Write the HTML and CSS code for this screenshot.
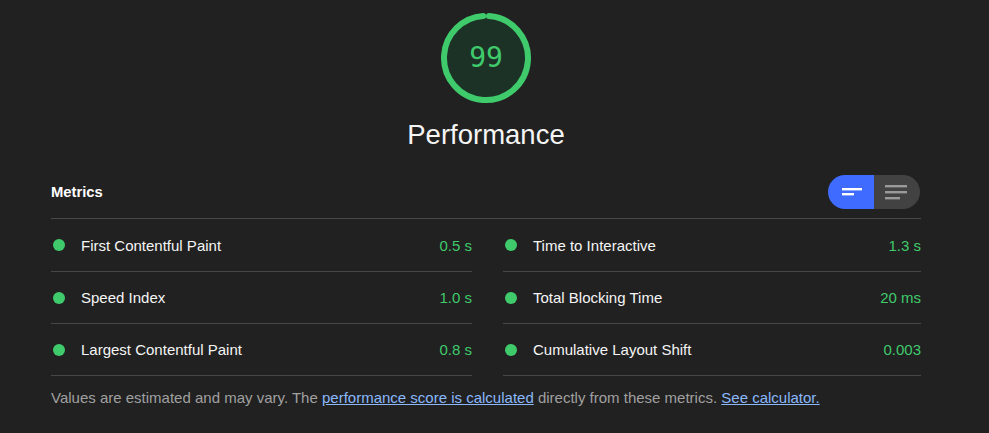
FILE: index.html
```html
<!DOCTYPE html>
<html>
<head>
<meta charset="utf-8">
<link rel="stylesheet" href="styles.css">
</head>
<body>
<div class="report">
  <div class="gauge-wrap">
    <div class="gauge">
      <svg width="92" height="92" viewBox="0 0 92 92">
        <circle cx="46" cy="46" r="42" fill="rgba(0,204,102,0.1)" stroke="none"/>
        <circle cx="46" cy="46" r="42" fill="none" stroke="#3fca6b" stroke-width="6" stroke-linecap="round" stroke-dasharray="257.6 263.9" transform="rotate(-85.9 46 46)"/>
      </svg>
      <span class="score">99</span>
    </div>
    <div class="title">Performance</div>
  </div>

  <div class="header">
    <div class="heading">Metrics</div>
    <div class="toggle">
      <div class="tog tog-on">
        <svg width="22" height="10" viewBox="0 0 22 10"><rect x="1" y="1" width="20" height="2.4" fill="#fff"/><rect x="1" y="6" width="12" height="2.4" fill="#fff"/></svg>
      </div>
      <div class="tog tog-off">
        <svg width="24" height="16" viewBox="0 0 24 16"><rect x="1" y="1" width="22" height="2.4" fill="#9a9a9a"/><rect x="1" y="7" width="22" height="2.4" fill="#9a9a9a"/><rect x="1" y="13" width="15" height="2.4" fill="#9a9a9a"/></svg>
      </div>
    </div>
  </div>

  <div class="grid">
    <div class="row"><span class="dot"></span><span class="name">First Contentful Paint</span><span class="val">0.5 s</span></div>
    <div class="row"><span class="dot"></span><span class="name">Time to Interactive</span><span class="val">1.3 s</span></div>
    <div class="row"><span class="dot"></span><span class="name">Speed Index</span><span class="val">1.0 s</span></div>
    <div class="row"><span class="dot"></span><span class="name">Total Blocking Time</span><span class="val">20 ms</span></div>
    <div class="row"><span class="dot"></span><span class="name">Largest Contentful Paint</span><span class="val">0.8 s</span></div>
    <div class="row"><span class="dot"></span><span class="name">Cumulative Layout Shift</span><span class="val">0.003</span></div>
  </div>

  <p class="footer">Values are estimated and may vary. The <a href="#">performance score is calculated</a> directly from these metrics. <a href="#">See calculator.</a></p>
</div>
</body>
</html>
```

FILE: styles.css
```css
html, body {
  margin: 0;
  padding: 0;
  background: #212121;
}
body {
  font-family: "Liberation Sans", Arial, sans-serif;
  color: #f5f5f5;
  font-size: 15px;
}
.report {
  width: 870px;
  margin-left: 51px;
}
.gauge-wrap {
  display: flex;
  flex-direction: column;
  align-items: center;
  padding-top: 12px;
}
.gauge {
  position: relative;
  width: 92px;
  height: 92px;
}
.gauge svg {
  display: block;
}
.score {
  position: absolute;
  left: 0;
  top: 0;
  width: 92px;
  height: 92px;
  line-height: 92px;
  text-align: center;
  font-family: "DejaVu Sans Mono", monospace;
  font-size: 28px;
  color: #3fca6b;
}
.title {
  margin-top: 15px;
  font-size: 27.5px;
  line-height: 32px;
  color: #f5f5f5;
}
.header {
  display: flex;
  align-items: center;
  justify-content: space-between;
  margin-top: 24px;
  height: 34px;
  margin-bottom: 9px;
}
.heading {
  font-weight: bold;
  font-size: 14.8px;
  color: #fff;
}
.toggle {
  display: flex;
  width: 92px;
  height: 34px;
  border-radius: 17px;
  overflow: hidden;
  margin-right: 1px;
}
.tog {
  flex: 1;
  display: flex;
  align-items: center;
  justify-content: center;
}
.tog-on {
  background: #3f6bff;
  padding-left: 2px;
}
.tog-off {
  background: #424242;
  padding-right: 2px;
}
.grid {
  display: grid;
  grid-template-columns: 421px 418px;
  column-gap: 31px;
  border-top: 1px solid #474747;
  background: linear-gradient(to right, transparent 421px, #212121 421px, #212121 452px, transparent 452px);
}
.row {
  display: flex;
  align-items: center;
  height: 51px;
  border-bottom: 1px solid #474747;
}
.grid .row:nth-child(1), .grid .row:nth-child(2) {
  height: 52px;
}
.dot {
  width: 12px;
  height: 12px;
  border-radius: 50%;
  background: #3fca6b;
  margin-left: 2px;
  margin-right: 16px;
  flex: none;
}
.name {
  flex: 1;
  color: #f5f5f5;
}
.val {
  color: #3fca6b;
}
.footer {
  margin: 12px 0 0;
  line-height: 20px;
  color: #a0a0a0;
}
.footer a {
  color: #8ab8fb;
  text-decoration: underline;
}
```
